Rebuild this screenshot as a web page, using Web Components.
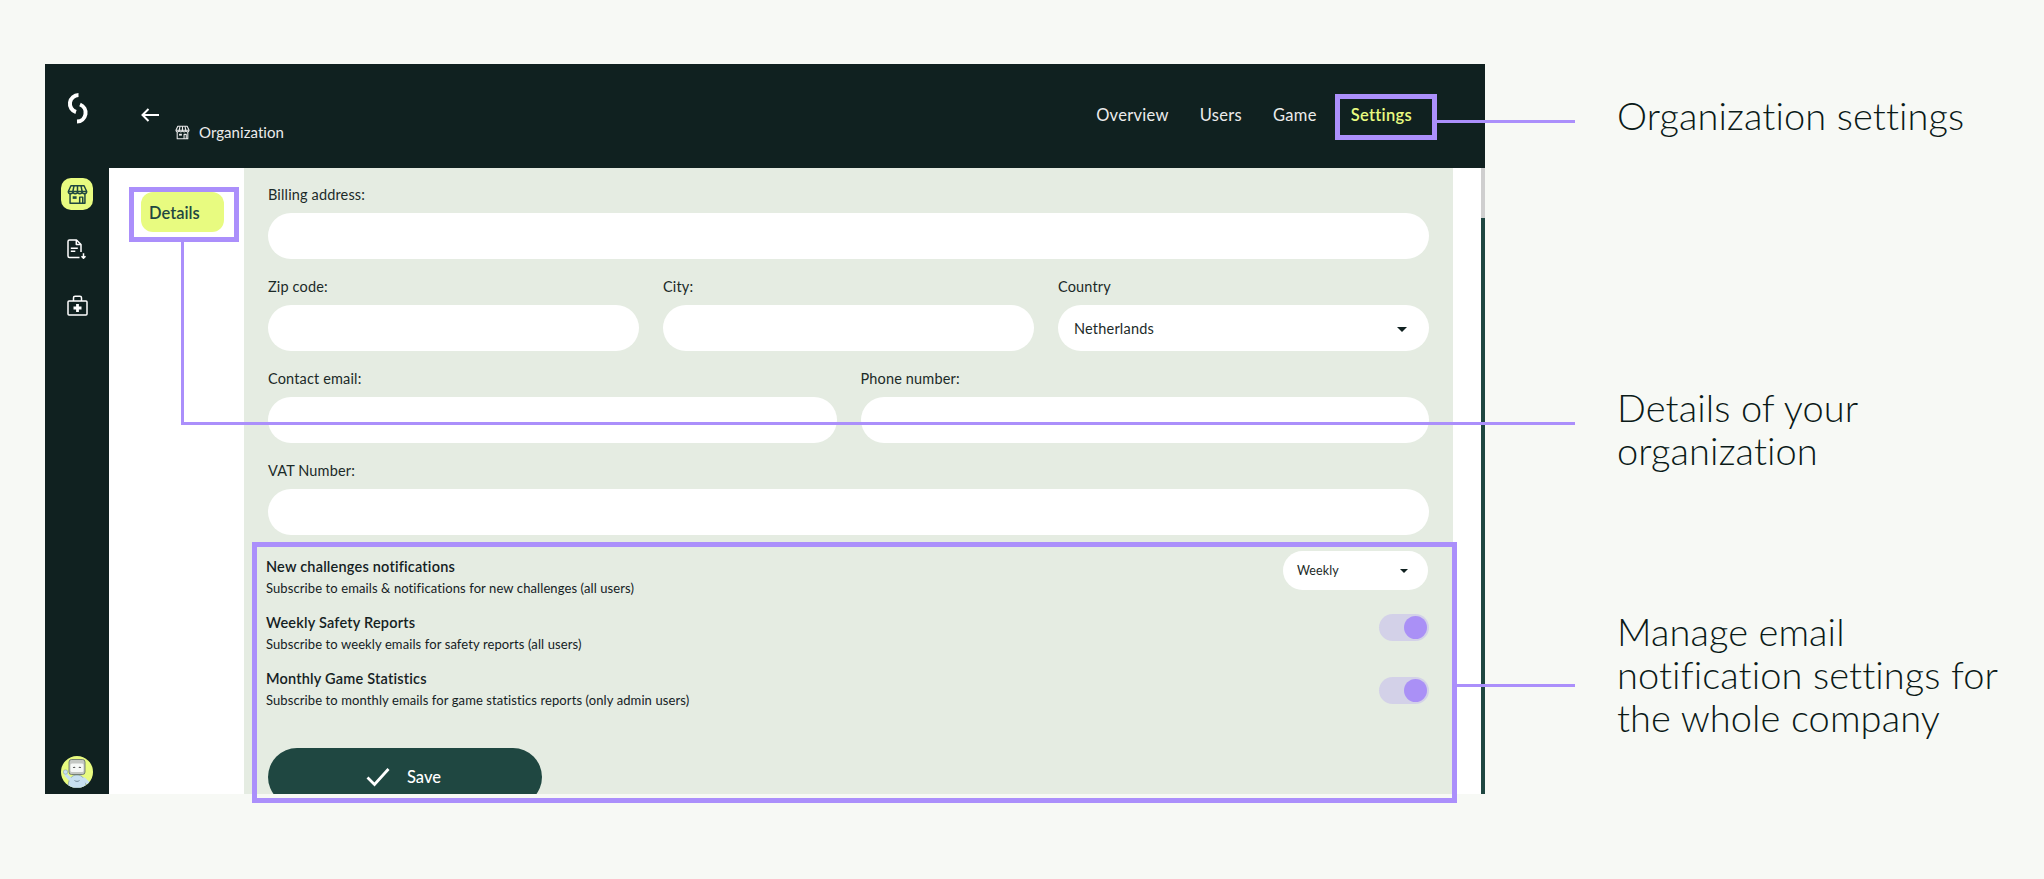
<!DOCTYPE html>
<html lang="en">
<head>
<meta charset="utf-8">
<title>Organization settings</title>
<style>
  html, body { margin: 0; height: 100%; background: #f7f9f5; }
  body { font-family: "Lato", "Liberation Sans", sans-serif; overflow: hidden; }
</style>
</head>
<body>
<guide-page>
  <app-shell>
    <side-rail slot="rail"></side-rail>
    <top-bar slot="top"></top-bar>
    <details-nav slot="nav"></details-nav>

    <form-field style="grid-column: span 6" label="Billing address:"><pill-input></pill-input></form-field>
    <form-field style="grid-column: span 2" label="Zip code:"><pill-input></pill-input></form-field>
    <form-field style="grid-column: span 2" label="City:"><pill-input></pill-input></form-field>
    <form-field style="grid-column: span 2" label="Country"><pill-select>Netherlands</pill-select></form-field>
    <form-field style="grid-column: span 3" label="Contact email:"><pill-input></pill-input></form-field>
    <form-field style="grid-column: span 3" label="Phone number:"><pill-input></pill-input></form-field>
    <form-field style="grid-column: span 6" label="VAT Number:"><pill-input></pill-input></form-field>

    <notify-row slot="notify" heading="New challenges notifications" text="Subscribe to emails &amp; notifications for new challenges (all users)">
      <mini-select>Weekly</mini-select>
    </notify-row>
    <notify-row slot="notify" heading="Weekly Safety Reports" text="Subscribe to weekly emails for safety reports (all users)">
      <toggle-switch></toggle-switch>
    </notify-row>
    <notify-row slot="notify" heading="Monthly Game Statistics" text="Subscribe to monthly emails for game statistics reports (only admin users)">
      <toggle-switch style="margin-top: 8px"></toggle-switch>
    </notify-row>
    <save-button slot="notify">Save</save-button>
  </app-shell>

  <callout-list>
    <callout-text style="margin-top: 30px">Organization settings</callout-text>
    <callout-text style="margin-top: 249px">Details of your<br>organization</callout-text>
    <callout-text style="margin-top: 138px">Manage email<br>notification settings for<br>the whole company</callout-text>
  </callout-list>

  <!-- purple annotation marks lying over the screenshot -->
  <call-mark box="1335,94,102,46" border="5"></call-mark>
  <call-mark box="129,187,110,55" border="5"></call-mark>
  <call-mark box="252,542,1205,261" border="5"></call-mark>
  <call-mark box="1437,119.5,138,3"></call-mark>
  <call-mark box="180.5,242,3,182"></call-mark>
  <call-mark box="180.5,421.5,1394.5,3"></call-mark>
  <call-mark box="1457,683.5,118,3"></call-mark>
</guide-page>

<script>
const html = (strings, ...vals) => {
    const t = document.createElement('template');
    t.innerHTML = String.raw(strings, ...vals);
    return t;
};

// every element here only stamps a template in its shadow root
const plain = (name, template) => {
    customElements.define(name, class extends HTMLElement {
        constructor() {
            super();
            this.attachShadow({mode: 'open'}).appendChild(template.content.cloneNode(true));
        }
    });
};

const storeIcon = `<svg viewBox="0 0 24 24" fill="none" stroke="currentColor" stroke-width="1.7" stroke-linejoin="round">
    <path d="M4.5 2h15l3 6.5c0 1.6-1.2 2.6-2.6 2.6S17.400 10 17.300 8.500c0 1.600-1.300 2.600-2.700 2.600S12 10 12 8.500c0 1.500-1.200 2.600-2.600 2.600S6.800 10 6.700 8.500c0 1.600-1.200 2.600-2.600 2.600S1.500 10 1.500 8.500z"/>
    <path d="M1.800 8.500h20.400M8 2.200 6.700 8.500M16 2.200l1.300 6.300M12 2v6.500"/>
    <path d="M3.500 11v11h17V11M14.500 22v-7h3.500v7"/>
    <rect x="6.500" y="14" width="4.500" height="3" fill="currentColor" stroke="none"/>
</svg>`;

plain('guide-page', html`
    <style>
    :host {
        display: flex;
        align-items: flex-start;
        position: relative;
        box-sizing: border-box;
        width: 2044px;
        height: 879px;
        padding: 64px 0 0 45px;
        background: #f7f9f5;
        overflow: hidden;
    }
    </style>
    <slot></slot>
`);

plain('app-shell', html`
    <style>
    :host {
        display: grid;
        grid-template-columns: 64px 135px 1209px 28px 4px;
        grid-template-rows: 104px 626px;
        flex: none;
        width: 1440px;
        height: 730px;
        overflow: hidden;
        background: #fff;
    }
    .top { grid-column: 2 / -1; }
    .rail { grid-row: 1 / 3; grid-column: 1; display: flex; }
    .panel {
        background: #e5ece2;
        box-sizing: border-box;
        padding: 17px 24px 0;
        overflow: hidden;
    }
    .fields {
        display: grid;
        grid-template-columns: repeat(6, 1fr);
        gap: 18px 24px;
    }
    .notify { margin: 22px 0 0 -2px; }
    .track { background: #cfcfcf; }
    .thumb { height: 50px; }
    .bar { background: #1f4741; height: 576px; }
    </style>
    <div class="rail"><slot name="rail"></slot></div>
    <div class="top"><slot name="top"></slot></div>
    <slot name="nav"></slot>
    <div class="panel">
        <div class="fields"><slot></slot></div>
        <div class="notify"><slot name="notify"></slot></div>
    </div>
    <div></div>
    <div class="track"><div class="thumb"></div><div class="bar"></div></div>
`);

plain('side-rail', html`
    <style>
    :host {
        display: block;
        position: relative;
        flex: 1;
        background: #102120;
        color: #fff;
    }
    .stack { display: flex; flex-direction: column; align-items: center; height: 100%; }
    .logo { width: 24px; height: 32px; margin-top: 28px; flex: none; }
    .tile {
        width: 32px; height: 32px; margin-top: 54px; flex: none;
        display: flex; align-items: center; justify-content: center;
        background: #e8fb80; border-radius: 10px; color: #1f4741;
    }
    .tile svg { width: 21px; height: 21px; }
    .doc { width: 20px; height: 20px; margin-top: 29px; flex: none; }
    .kit { width: 21px; height: 21px; margin-top: 36px; flex: none; }
    .avatar { width: 32px; height: 32px; margin-top: auto; margin-bottom: 6px; flex: none; }
    </style>
    <div class="stack">
        <svg class="logo" viewBox="0 0 24 32" fill="none" stroke="#fff" stroke-width="4">
            <path d="M13.500 3A8.700 8.700 0 0 0 11 20"/>
            <path d="M15 12.500A8.800 8.800 0 0 1 12 29.500"/>
        </svg>
        <div class="tile">${storeIcon}</div>
        <svg class="doc" viewBox="0 0 20 20" fill="none" stroke="#fff" stroke-width="1.500" stroke-linejoin="round">
            <path d="M12.500 18.500H2.500a1.500 1.500 0 0 1-1.500-1.500V2.500A1.500 1.500 0 0 1 2.500 1H9.500L14 5.500V13"/>
            <path d="M9.300 1v4.500H14"/>
            <path d="M3.800 9.200h7M3.800 12.300h4.500"/>
            <path d="M16.500 14.200v5M14.500 17.300l2 2 2-2"/>
        </svg>
        <svg class="kit" viewBox="0 0 21 21" fill="none" stroke="#fff" stroke-width="1.500">
            <rect x="1" y="6" width="19" height="14" rx="1"/>
            <path d="M6.500 6V2.800a1.600 1.600 0 0 1 1.600-1.600h4.800a1.600 1.600 0 0 1 1.600 1.600V6"/>
            <path d="M10.500 9v8M6.500 13h8" stroke-width="2.800"/>
        </svg>
        <svg class="avatar" viewBox="0 0 32 32">
            <clipPath id="disc"><circle cx="16" cy="16" r="16"/></clipPath>
            <g clip-path="url(#disc)">
                <rect width="32" height="32" fill="#e8fb80"/>
                <path d="M7 32c0-9 3.500-13 9-13s9 4 9 13z" fill="#c8e0f0" stroke="#7f98a8" stroke-width=".7"/>
                <path d="M9 23 5 19M23 23l5 5" stroke="#c8e0f0" stroke-width="3.200" stroke-linecap="round"/>
                <circle cx="4.500" cy="16" r="2.200" fill="#c8e0f0" stroke="#7f98a8" stroke-width=".5"/>
                <rect x="8" y="3.500" width="16" height="15" rx="2.500" fill="#c4c7c3" stroke="#5d6a66" stroke-width=".8"/>
                <rect x="9.500" y="7.500" width="13" height="8.500" rx="1.500" fill="#f6f8f6"/>
                <path d="M12 12c.6-1 1.700-1 2.300 0M17.700 12c.6-1 1.700-1 2.300 0" fill="none" stroke="#222" stroke-width=".9"/>
                <path d="M13.500 24.500c1.500 1.200 3.500 1.200 5 0" fill="none" stroke="#6f8694" stroke-width=".9"/>
            </g>
        </svg>
    </div>
`);

plain('top-bar', html`
    <style>
    :host {
        display: flex;
        height: 104px;
        box-sizing: border-box;
        padding: 0 0 0 32px;
        background: #102120;
        color: #ececec;
        font-size: 15px;
    }
    .crumbs { padding-top: 43px; }
    .back { display: block; width: 18px; height: 16px; }
    .org { display: flex; align-items: center; gap: 9px; margin: 0 0 0 34px; letter-spacing: .05px; }
    .org svg { width: 15px; height: 15px; }
    nav {
        display: flex;
        margin-left: auto;
        padding: 41px 73px 0 0;
        gap: 31px;
        font-size: 16.500px;
        line-height: 20px;
        letter-spacing: .3px;
    }
    .on { color: #e8fb80; font-weight: 600; margin-left: 3px; }
    </style>
    <div class="crumbs">
        <svg class="back" viewBox="0 0 18 16" fill="none" stroke="#fff" stroke-width="2">
            <path d="M18 8H1.500M7.500 2 1.500 8l6 6"/>
        </svg>
        <div class="org">${storeIcon}<span>Organization</span></div>
    </div>
    <nav><span>Overview</span><span>Users</span><span>Game</span><span class="on">Settings</span></nav>
`);

plain('details-nav', html`
    <style>
    :host { display: block; padding: 24px 20px 0 32px; background: #fff; }
    div {
        box-sizing: border-box;
        width: 83px;
        height: 40px;
        padding-left: 8px;
        border-radius: 12px;
        background: #e8fb80;
        color: #1f4741;
        font-size: 16.500px;
        font-weight: 600;
        line-height: 42px;
    }
    </style>
    <div>Details</div>
`);

customElements.define('form-field', class extends HTMLElement {
    constructor() {
        super();
        const root = this.attachShadow({mode: 'open'});
        root.innerHTML = `
            <style>
            :host { display: block; color: #1b2a28; }
            label { display: block; height: 20px; margin-bottom: 8px; font-size: 14.500px; line-height: 20px; letter-spacing: .15px; }
            </style>
            <label></label><slot></slot>`;
        root.querySelector('label').textContent = this.getAttribute('label');
    }
});

plain('pill-input', html`
    <style>
    :host { display: block; height: 46px; border-radius: 23px; background: #fff; }
    </style>
`);

plain('pill-select', html`
    <style>
    :host {
        display: flex;
        align-items: center;
        justify-content: space-between;
        box-sizing: border-box;
        height: 46px;
        padding: 0 22px 0 16px;
        border-radius: 23px;
        background: #fff;
        color: #1b2a28;
        font-size: 14.500px;
        letter-spacing: .2px;
    }
    i { width: 0; height: 0; border: 5px solid transparent; border-top-color: #102120; border-bottom: 0; margin-top: 2px; }
    </style>
    <slot></slot><i></i>
`);

plain('mini-select', html`
    <style>
    :host {
        display: flex;
        align-items: center;
        justify-content: space-between;
        box-sizing: border-box;
        width: 145px;
        height: 39px;
        margin: -6px 1px 0 0;
        padding: 0 20px 0 14px;
        border-radius: 20px;
        background: #fff;
        color: #1b2a28;
        font-size: 12.500px;
        letter-spacing: .1px;
    }
    i { width: 0; height: 0; border: 4px solid transparent; border-top-color: #102120; border-bottom: 0; margin-top: 1px; }
    </style>
    <slot></slot><i></i>
`);

plain('toggle-switch', html`
    <style>
    :host {
        display: flex;
        justify-content: flex-end;
        align-items: center;
        box-sizing: border-box;
        width: 50px;
        height: 27px;
        margin-top: 1px;
        padding-right: 2px;
        border-radius: 14px;
        background: #d3d1e8;
    }
    i { width: 23px; height: 23px; border-radius: 50%; background: #aa90f6; }
    </style>
    <i></i>
`);

customElements.define('notify-row', class extends HTMLElement {
    constructor() {
        super();
        const root = this.attachShadow({mode: 'open'});
        root.innerHTML = `
            <style>
            :host { display: flex; justify-content: space-between; align-items: flex-start; height: 56px; color: #14211f; }
            b { display: block; font-size: 14.500px; font-weight: 600; line-height: 20px; letter-spacing: .2px; }
            span { display: block; margin-top: 1px; font-size: 13px; line-height: 20px; letter-spacing: .1px; }
            </style>
            <div><b></b><span></span></div><slot></slot>`;
        root.querySelector('b').textContent = this.getAttribute('heading');
        root.querySelector('span').textContent = this.getAttribute('text');
    }
});

plain('save-button', html`
    <style>
    :host {
        display: flex;
        align-items: center;
        gap: 17px;
        box-sizing: border-box;
        width: 274px;
        height: 58px;
        margin: 23px 0 0 2px;
        padding-left: 98px;
        border-radius: 29px;
        background: #1f4741;
        color: #fff;
        font-size: 16.500px;
        font-weight: 500;
    }
    svg { width: 24px; height: 20px; }
    </style>
    <svg viewBox="0 0 24 20" fill="none" stroke="#fff" stroke-width="2.800"><path d="M1.500 10.500 8.500 17.500 22.500 2"/></svg>
    <slot></slot>
`);

plain('callout-list', html`
    <style>
    :host {
        display: flex;
        flex-direction: column;
        flex: none;
        margin-left: 132px;
        color: #0b1a18;
    }
    </style>
    <slot></slot>
`);

plain('callout-text', html`
    <style>
    :host {
        display: block;
        font-size: 38px;
        font-weight: 300;
        line-height: 43px;
        letter-spacing: .1px;
        font-feature-settings: "liga" 0;
        white-space: nowrap;
    }
    </style>
    <slot></slot>
`);

customElements.define('call-mark', class extends HTMLElement {
    constructor() {
        super();
        const root = this.attachShadow({mode: 'open'});
        root.innerHTML = `
            <style>
            :host { display: block; position: absolute; box-sizing: border-box; }
            </style>`;
    }
    connectedCallback() {
        const [x, y, w, h] = this.getAttribute('box').split(',');
        const border = this.getAttribute('border');
        Object.assign(this.style, {left: x + 'px', top: y + 'px', width: w + 'px', height: h + 'px'});
        if (border) this.style.border = border + 'px solid #ab8ffb';
        else this.style.background = '#ab8ffb';
    }
});
</script>
</body>
</html>
